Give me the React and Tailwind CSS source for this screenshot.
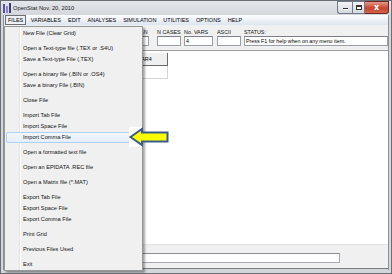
import React from "react";

const font = "font-['Liberation_Sans',Arial,sans-serif]";

const menuGroups = [
  ["New File (Clear Grid)"],
  ["Open a Text-type file (.TEX or .S4U)", "Save a Text-type File (.TEX)"],
  ["Open a binary file (.BIN or .OS4)", "Save a binary File (.BIN)"],
  ["Close File"],
  ["Import Tab File", "Import Space File", "Import Comma File"],
  ["Open a formatted text file"],
  ["Open an EPIDATA .REC file"],
  ["Open a Matrix file (*.MAT)"],
  ["Export Tab File", "Export Space File", "Export Comma File"],
  ["Print Grid"],
  ["Previous Files Used"],
  ["Exit"],
];

const menuBar = ["FILES", "VARIABLES", "EDIT", "ANALYSES", "SIMULATION", "UTILITIES", "OPTIONS", "HELP"];

function Field({ label, width, value }) {
  return (
    <div className="flex flex-col" style={{ width }}>
      <div className="h-[7px] text-[5.4px] leading-[7px] whitespace-nowrap text-[#111]">{label}</div>
      <div className="h-[10px] bg-white border border-[#9a9ea6] border-t-[#7d8087] text-[5.3px] leading-[8px] pl-[1px] whitespace-nowrap overflow-hidden">
        {value}
      </div>
    </div>
  );
}

export default function App() {
  return (
    <div className={`w-[392px] h-[274px] relative overflow-hidden bg-[#d3d7dc] border border-[#6b6e72] flex flex-col ${font} text-black`}>
      {/* Title bar */}
      <div className="h-[14px] flex items-start bg-[linear-gradient(#e4e7ea,#d3d7dc)]">
        <div className="flex items-center h-[13px] pl-[2px] gap-[2px]">
          <svg width="8" height="10" viewBox="0 0 8 10">
            <rect x="0" y="1" width="2" height="9" fill="#5a4f9c" />
            <rect x="3" y="3" width="2" height="7" fill="#8a86c8" />
            <rect x="6" y="0" width="2" height="10" fill="#3f3a86" />
          </svg>
          <span className="text-[5.75px] leading-[8px] text-[#1b1b1b] whitespace-nowrap">OpenStat Nov. 20, 2010</span>
        </div>
        <div className="ml-auto mr-[2px] flex h-[13px]">
          <div className="w-[15px] h-[13px] border border-[#6f7b8c] border-r-0 rounded-bl-[3px] bg-[linear-gradient(#f3f4f6,#d4d9e0)] flex items-end justify-center pb-[3px]">
            <div className="w-[5px] h-[2px] bg-[#333] border-b border-white" />
          </div>
          <div className="w-[13px] h-[13px] border border-[#6f7b8c] bg-[linear-gradient(#f3f4f6,#d4d9e0)] flex items-center justify-center">
            <div className="w-[6px] h-[5px] border border-[#333] border-t-2 bg-white" />
          </div>
          <div className="w-[24px] h-[13px] border border-[#6e2a20] border-l-0 rounded-br-[3px] bg-[linear-gradient(#e49a8a,#c8452f_55%,#d4624a)] flex items-center justify-center">
            <span className="text-[8px] leading-[8px] font-bold text-white font-['DejaVu_Sans',sans-serif]">x</span>
          </div>
        </div>
      </div>

      {/* Client */}
      <div className="flex-1 flex flex-col ml-[2px] mr-[2px] border-l border-r border-[#8d9095]">
        {/* Menu bar */}
        <div className="h-[10px] flex items-stretch pl-[1px] bg-[linear-gradient(#fdfdfe,#dde5f0)] text-[5.5px] leading-[8px]">
          {menuBar.map((m, i) => (
            <div
              key={m}
              className={
                i === 0
                  ? "px-[2px] mr-[1px] border border-[#6d6f73] bg-[#eef1f6] flex items-center whitespace-nowrap"
                  : "px-[3.5px] flex items-center whitespace-nowrap"
              }
            >
              {m}
            </div>
          ))}
        </div>

        {/* Toolbar */}
        <div className="h-[25px] bg-[#f0f0f0] flex items-start pt-[4px] pl-[123px]">
          <Field label="DESIGN" width={22} />
          <div className="w-[8px]" />
          <Field label="N CASES" width={24} />
          <div className="w-[3px]" />
          <Field label="No. VARS" width={29} value="4" />
          <div className="w-[4px]" />
          <Field label="ASCII" width={24} />
          <div className="w-[3px]" />
          <Field label="STATUS:" width={144} value="Press F1 for help when on any menu item." />
        </div>

        {/* Grid */}
        <div className="h-[194px] bg-white border-t border-[#a0a0a0] pt-[2px] pl-[2px] text-[5.4px] leading-[12px]">
          <div className="flex h-[13px]">
            <div className="w-[30px] bg-[#f0f0f0] border-r border-b border-[#8a8a8a]" />
            {["", "", "", "VAR4"].map((v, i) => (
              <div key={i} className="w-[33px] bg-[#f0f0f0] border-r border-b border-[#6a6a6a] pl-[3px]">
                {v}
              </div>
            ))}
          </div>
          <div className="flex h-[13px]">
            <div className="w-[30px] bg-[#f0f0f0] border-r border-b border-[#bdbdbd]" />
            {[1, 2, 3, 4].map((v) => (
              <div key={v} className="w-[33px] bg-white border-r border-b border-[#d6d6d6]" />
            ))}
          </div>
        </div>

        {/* Bottom bar */}
        <div className="h-[25px] bg-[#f0f0f0] border-t border-[#e2e2e2] border-b border-b-[#7a7d82] pt-[8px] pl-[7px]">
          <div className="w-[329px] h-[10px] bg-white border border-[#a5a8ae] border-t-[#8a8d93]" />
        </div>
      </div>
      <div className="h-[3px]" />

      {/* Dropdown menu overlay */}
      <div className="absolute left-[3px] top-[25px] w-[139px] h-[245px] bg-[#f0f0f0] border border-[#979797] shadow-[2px_2px_2px_rgba(0,0,0,0.35)] pt-[1px] text-[5.65px] leading-[9px] text-[#111]">
        <div className="absolute left-[14px] top-0 bottom-0 w-[1px] bg-[#e2e3e3]" />
        <div className="absolute left-[15px] top-0 bottom-0 w-[1px] bg-white" />
        <div className="relative flex flex-col">
          {menuGroups.map((g, gi) => (
            <div key={gi} className={gi === 0 ? "flex flex-col" : "flex flex-col pt-[4px]"}>
              {g.map((item) => (
                <div
                  key={item}
                  className={
                    item === "Import Comma File"
                      ? "h-[11px] mx-[1px] pl-[16px] flex items-center whitespace-nowrap border border-[#aecff7] rounded-[2px] bg-[linear-gradient(#f2f7fd,#e4eefb)]"
                      : "h-[11px] mx-[1px] pl-[16px] flex items-center whitespace-nowrap border border-transparent"
                  }
                >
                  {item}
                </div>
              ))}
            </div>
          ))}
        </div>
      </div>

      {/* Yellow arrow annotation */}
      <svg className="absolute left-[127px] top-[126px]" width="42" height="20" viewBox="0 0 42 20">
        <rect x="1" y="0" width="13" height="20" fill="#ffffff" />
        <polygon
          points="2.5,10 14,2 14,5.5 39.5,5.5 39.5,14.5 14,14.5 14,18"
          fill="#ffff00"
          stroke="#385d8a"
          strokeWidth="2"
          strokeLinejoin="miter"
        />
      </svg>
    </div>
  );
}
